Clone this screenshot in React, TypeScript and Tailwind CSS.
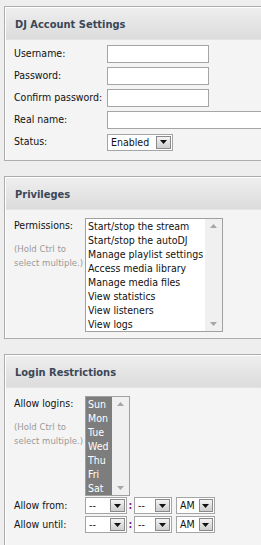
import React from "react";

const font = "font-['DejaVu_Sans_Condensed','DejaVu_Sans',sans-serif]";

function DropArrow() {
  return (
    <span className="ml-auto mr-[1px] flex h-[13px] w-[15px] items-center justify-center border border-[#8a8a8a] bg-gradient-to-b from-[#f4f4f4] to-[#cecece]">
      <svg width="7" height="4" viewBox="0 0 7 4">
        <path d="M0 0h7L3.5 4z" fill="#111" />
      </svg>
    </span>
  );
}

function Select({ value, width }: { value: string; width: string }) {
  return (
    <div className={`flex h-[17px] items-center border border-[#a5a5a5] bg-white ${width}`}>
      <span className="pl-[3px] pr-[4px] leading-[15px]">{value}</span>
      <DropArrow />
    </div>
  );
}

function ListBox({
  items,
  selected,
  itemWidth,
}: {
  items: string[];
  selected?: boolean;
  itemWidth: string;
}) {
  return (
    <div className="flex border border-[#a0a0a0] bg-white">
      <div className={`flex flex-col ${itemWidth}`}>
        {items.map((item) => (
          <div
            key={item}
            className={`h-[14px] whitespace-nowrap px-[2px] leading-[14px] ${
              selected ? "bg-[#7d7d7d] text-white" : ""
            }`}
          >
            {item}
          </div>
        ))}
      </div>
      <div className="flex w-[17px] flex-col items-center justify-between bg-[#f0f0f0] pb-[5px] pt-[5px]">
        <svg width="7" height="4" viewBox="0 0 7 4">
          <path d="M0 4h7L3.5 0z" fill="#a6a6a6" />
        </svg>
        <svg width="7" height="4" viewBox="0 0 7 4">
          <path d="M0 0h7L3.5 4z" fill="#a6a6a6" />
        </svg>
      </div>
    </div>
  );
}

function Panel({
  title,
  children,
  className,
}: {
  title: string;
  children: React.ReactNode;
  className: string;
}) {
  return (
    <div className={`ml-[4px] w-[320px] border border-[#acacac] bg-[#f4f4f4] ${className}`}>
      <div className="border-l border-t border-white">
        <div className="flex h-[32px] items-center border-b border-[#e4e4e4] bg-gradient-to-b from-[#eeeeee] to-[#dcdcdc] pl-[9px] pt-[4px] text-[11px] font-bold text-[#3a4757]">
          {title}
        </div>
        {children}
      </div>
    </div>
  );
}

function Hint() {
  return (
    <div className="mt-[10px] text-[9.5px] leading-[14px] text-[#9a9a9a]">
      (Hold Ctrl to
      <br />
      select multiple.)
    </div>
  );
}

function TimeRow({ label }: { label: string }) {
  return (
    <div className="flex h-[19px] items-center">
      <span className="w-[71px]">{label}</span>
      <Select value="--" width="w-[42px]" />
      <span className="w-[7px] text-center font-bold text-[#7a1f8a]">:</span>
      <Select value="--" width="w-[38px]" />
      <span className="w-[4px]" />
      <Select value="AM" width="w-[39px]" />
    </div>
  );
}

const inputCls = "h-[18px] border border-[#a5a5a5] bg-white";

export default function App() {
  const fields: [string, string][] = [
    ["Username:", "w-[102px]"],
    ["Password:", "w-[102px]"],
    ["Confirm password:", "w-[102px]"],
    ["Real name:", "w-[200px]"],
  ];

  return (
    <div className={`${font} min-h-[545px] w-full overflow-hidden bg-[#eeeeee] pt-[6px] text-[10.5px] text-[#111]`}>
      <Panel title="DJ Account Settings" className="">
        <div className="pb-[7px] pl-[8px] pt-[3px]">
          {fields.map(([label, w]) => (
            <div key={label} className="flex h-[22px] items-center">
              <span className="w-[93px] whitespace-nowrap">{label}</span>
              <input className={`${inputCls} ${w}`} />
            </div>
          ))}
          <div className="flex h-[22px] items-center">
            <span className="w-[93px]">Status:</span>
            <Select value="Enabled" width="w-[66px]" />
          </div>
        </div>
      </Panel>

      <Panel title="Privileges" className="mt-[15px]">
        <div className="flex pb-[6px] pl-[8px] pt-[8px]">
          <div className="w-[71px] whitespace-nowrap">
            <div className="leading-[14px]">Permissions:</div>
            <Hint />
          </div>
          <ListBox
            itemWidth="w-[119px]"
            items={[
              "Start/stop the stream",
              "Start/stop the autoDJ",
              "Manage playlist settings",
              "Access media library",
              "Manage media files",
              "View statistics",
              "View listeners",
              "View logs",
            ]}
          />
        </div>
      </Panel>

      <Panel title="Login Restrictions" className="mt-[15px]">
        <div className="pb-[20px] pl-[8px] pt-[8px]">
          <div className="flex">
            <div className="w-[71px] whitespace-nowrap">
              <div className="leading-[14px]">Allow logins:</div>
              <Hint />
            </div>
            <ListBox
              selected
              itemWidth="w-[26px]"
              items={["Sun", "Mon", "Tue", "Wed", "Thu", "Fri", "Sat"]}
            />
          </div>
          <div>
            <TimeRow label="Allow from:" />
            <TimeRow label="Allow until:" />
          </div>
        </div>
      </Panel>
    </div>
  );
}
